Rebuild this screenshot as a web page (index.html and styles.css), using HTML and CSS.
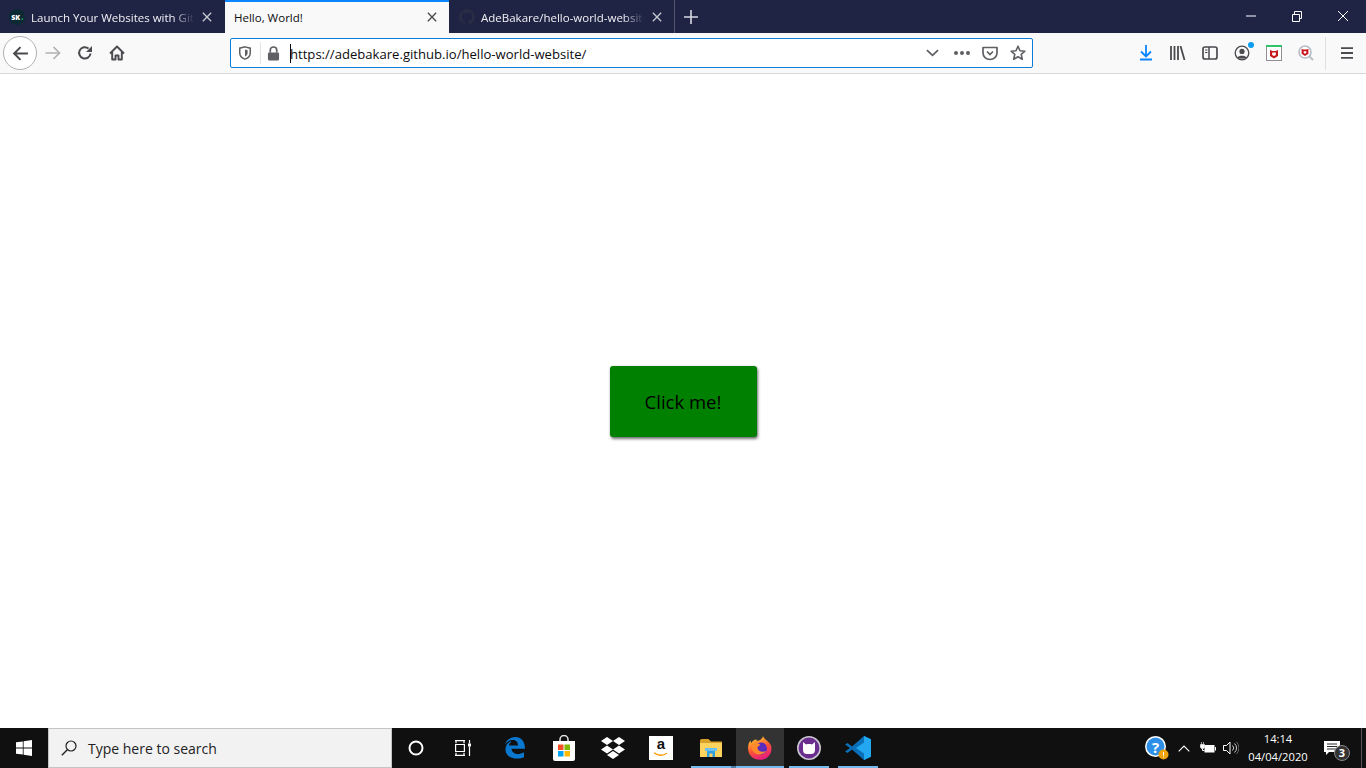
FILE: index.html
```html
<!DOCTYPE html>
<html lang="en">
<head>
<meta charset="utf-8">
<title>Hello, World!</title>
<link rel="stylesheet" href="styles.css">
</head>
<body>
<div class="browser">
  <header class="tabbar">
    <div class="tab tab-first">
      <svg class="favicon" viewBox="0 0 16 16"><circle cx="8" cy="8" r="8" fill="#0c2a33"/><text x="2.200" y="10.600" class="sk">SK</text><circle cx="13.300" cy="10" r=".8" fill="#2fd08a"/></svg>
      <span class="tab-title">Launch Your Websites with Gith</span>
      <svg class="tab-close" viewBox="0 0 12 12"><path d="M1 1l10 10M11 1L1 11" stroke="#c6c8d0" stroke-width="1.600"/></svg>
    </div>
    <div class="tab tab-active">
      <span class="tab-title">Hello, World!</span>
      <svg class="tab-close" viewBox="0 0 12 12"><path d="M1 1l10 10M11 1L1 11" stroke="#4a4a4f" stroke-width="1.600"/></svg>
    </div>
    <div class="tab tab-third">
      <svg class="favicon" viewBox="0 0 16 16"><path fill="#2a2d45" d="M8 0a8 8 0 0 0-2.500 15.600c.4.100.5-.2.5-.4v-1.400c-2.200.5-2.700-1-2.700-1-.4-.9-.9-1.200-.9-1.200-.7-.5.100-.5.100-.5.800.100 1.200.800 1.200.800.700 1.200 1.900.900 2.300.700.100-.5.300-.9.500-1.100-1.800-.2-3.600-.9-3.600-4 0-.9.300-1.600.800-2.100-.1-.2-.4-1 .100-2.100 0 0 .700-.2 2.200.800a7.600 7.600 0 0 1 4 0c1.500-1 2.200-.8 2.200-.8.400 1.100.2 1.900.1 2.100.5.600.8 1.300.8 2.100 0 3.100-1.900 3.700-3.700 3.900.3.300.6.800.6 1.500v2.200c0 .2.100.5.600.4A8 8 0 0 0 8 0z"/></svg>
      <span class="tab-title">AdeBakare/hello-world-website</span>
      <svg class="tab-close" viewBox="0 0 12 12"><path d="M1 1l10 10M11 1L1 11" stroke="#c6c8d0" stroke-width="1.600"/></svg>
    </div>
    <div class="new-tab"><svg viewBox="0 0 14 14"><path d="M7 0v14M0 7h14" stroke="#d8dae2" stroke-width="1.600"/></svg></div>
    <div class="win-controls">
      <svg viewBox="0 0 46 33" class="win-btn"><path d="M18 16h10" stroke="#fff"/></svg>
      <svg viewBox="0 0 46 33" class="win-btn"><path d="M18.500 14.500h7v7h-7zM20.500 14v-2.500h7v7H26" fill="none" stroke="#fff"/></svg>
      <svg viewBox="0 0 46 33" class="win-btn"><path d="M18 11l10 10M28 11L18 21" stroke="#fff"/></svg>
    </div>
  </header>

  <nav class="navbar">
    <button class="back" aria-label="Back"><svg viewBox="0 0 16 16"><path d="M15 8H2M8 2L2 8l6 6" fill="none" stroke="#4a4a4f" stroke-width="1.900"/></svg></button>
    <svg class="nav-icon fwd" viewBox="0 0 16 16"><path d="M0 8h14M8 2l6 6-6 6" fill="none" stroke="#b1b1b3" stroke-width="1.700"/></svg>
    <svg class="nav-icon reload" viewBox="0 0 16 16"><path d="M13.500 8.500A5.700 5.700 0 1 1 11.500 3.500" fill="none" stroke="#4a4a4f" stroke-width="2"/><path d="M15 1v6H9z" fill="#4a4a4f"/></svg>
    <svg class="nav-icon home" viewBox="0 0 16 16"><path d="M1 8.500L8 1.500l7 7M3.200 7v7.500h3.300V10.500h3V14.500h3.300V7" fill="none" stroke="#4a4a4f" stroke-width="1.900" stroke-linejoin="round"/></svg>

    <div class="urlbar">
      <svg class="u-shield" viewBox="0 0 16 16"><path d="M8 1l6 1.500V8c0 3.500-3 6-6 7-3-1-6-3.500-6-7V2.500z" fill="none" stroke="#5f5f64" stroke-width="1.700"/><path d="M8 4l3 .8V8c0 2-1.500 3.300-3 4z" fill="#5f5f64"/></svg>
      <span class="u-sep"></span>
      <svg class="u-lock" viewBox="0 0 14 16"><path d="M3.500 7V4.500a3.500 3.500 0 0 1 7 0V7" fill="none" stroke="#5f5f64" stroke-width="1.800"/><rect x="1" y="7" width="12" height="8.500" rx="1.200" fill="#5f5f64"/></svg>
      <span class="u-text"><span class="caret"></span>https://adebakare.github.io/hello-world-website/</span>
      <svg class="u-chev" viewBox="0 0 14 8"><path d="M1 1l6 5.500L13 1" fill="none" stroke="#5f5f64" stroke-width="1.900"/></svg>
      <svg class="u-dots" viewBox="0 0 16 4"><circle cx="2" cy="2" r="2" fill="#5f5f64"/><circle cx="8" cy="2" r="2" fill="#5f5f64"/><circle cx="14" cy="2" r="2" fill="#5f5f64"/></svg>
      <svg class="u-pocket" viewBox="0 0 16 16"><path d="M1 2.500h14V8a7 6.500 0 0 1-14 0z" fill="none" stroke="#5f5f64" stroke-width="1.700" stroke-linejoin="round"/><path d="M5 6.500l3 3 3-3" fill="none" stroke="#5f5f64" stroke-width="1.700"/></svg>
      <svg class="u-star" viewBox="0 0 16 16"><path d="M8 1.200l2 4.500 4.900.5-3.700 3.200 1.100 4.900L8 11.800l-4.300 2.500 1.100-4.900L1.100 6.200 6 5.700z" fill="none" stroke="#5f5f64" stroke-width="1.600" stroke-linejoin="round"/></svg>
    </div>

    <div class="tools">
      <svg class="t-download" viewBox="0 0 14 16"><path d="M7 0v11M2 6.500l5 5 5-5" fill="none" stroke="#0a84ff" stroke-width="1.800"/><path d="M1 14.500h12" stroke="#0a84ff" stroke-width="2"/></svg>
      <svg class="t-library" viewBox="0 0 16 14"><path d="M1 0v14M4.500 0v14M8 0v14M10.500 0l4 14" fill="none" stroke="#4a4a4f" stroke-width="1.800"/></svg>
      <svg class="t-sidebar" viewBox="0 0 16 14"><rect x="1" y="1" width="14" height="12" rx="2" fill="none" stroke="#4a4a4f" stroke-width="1.700"/><path d="M7 1v12" stroke="#4a4a4f" stroke-width="1.500"/><path d="M3 4h2.500M3 6.500h2.500" stroke="#4a4a4f"/></svg>
      <span class="t-account">
        <svg viewBox="0 0 16 16"><circle cx="8" cy="8" r="6.800" fill="none" stroke="#4a4a4f" stroke-width="1.300"/><circle cx="8" cy="6.400" r="2.600" fill="#4a4a4f"/><path d="M3.500 12.500c1-2.500 8-2.500 9 0-1.500 1.500-7.500 1.500-9 0z" fill="#4a4a4f"/></svg>
        <i class="t-dot"></i>
      </span>
      <svg class="t-mcafee" viewBox="0 0 16 16"><rect x=".5" y=".5" width="15" height="15" fill="#fff" stroke="#8f8f94"/><rect width="16" height="2" fill="#2fc46a"/><path d="M4 5l2.500 1h3L12 5v6l-4 2.500L4 11z" fill="#c8161d"/><path d="M6.200 7.500h3.600v2.500L8 11l-1.800-1z" fill="#fff"/></svg>
      <svg class="t-search" viewBox="0 0 16 16"><circle cx="7" cy="7" r="6" fill="#fff" stroke="#b5bcc4" stroke-width="1.600"/><path d="M11 11l4 4" stroke="#b5bcc4" stroke-width="1.800"/><path d="M3.600 3.800l1.800.8h3.200l1.800-.8v5l-3.400 2.200-3.400-2.200z" fill="#c8161d"/><path d="M5.700 6.200h2.600v1.800L7 8.800 5.700 8z" fill="#fff"/></svg>
      <span class="t-sep"></span>
      <svg class="t-menu" viewBox="0 0 14 12"><path d="M1 1.200h12M1 6h12M1 10.800h12" stroke="#4a4a4f" stroke-width="1.800"/></svg>
    </div>
  </nav>

  <main class="page">
    <button class="cta">Click me!</button>
  </main>

  <footer class="taskbar">
    <div class="start"><svg viewBox="0 0 16 16"><path fill="#fff" d="M0 2.300l6.800-.9v6.200H0zM7.600 1.300L16 0v7.600H7.600zM0 8.400h6.800v6.200L0 13.700zM7.600 8.400H16V16l-8.400-1.200z"/></svg></div>
    <div class="search">
      <svg viewBox="0 0 16 16"><circle cx="10" cy="6" r="5" fill="none" stroke="#222" stroke-width="1.200"/><path d="M6.300 9.700L.8 15.200" stroke="#222" stroke-width="1.400"/></svg>
      <span>Type here to search</span>
    </div>
    <div class="tb-item tb-cortana"><svg viewBox="0 0 16 16"><circle cx="8" cy="8" r="6.500" fill="none" stroke="#fff" stroke-width="2"/></svg></div>
    <div class="tb-item tb-view"><svg viewBox="0 0 18 16"><path d="M0 .7h10M0 15.300h10M1 .7v2.500M9 .7v2.500M1 12.800v2.500M9 12.800v2.500M.6 4.500h8.800v7H.6z" fill="none" stroke="#fff" stroke-width="1.200"/><rect x="13" y="3.500" width="3" height="3" fill="#fff"/><path d="M14.500 0v3.500M14.500 6.500V16" stroke="#fff" stroke-width="1.200"/></svg></div>
    <div class="tb-item tb-edge"><svg viewBox="0 0 20 22"><path fill="#0b78d0" d="M10.500 0C16 0 20 4 20 11.800H6.500c.3 5 6.500 7 12.500 3.500v5C13 23 1 22 .5 13 .2 8.500 3 5 6.800 4c-1.800 1.700-2.600 3-2.800 4.500h9C13 5.500 11.500 3 7.800 3 4 3 1.600 5 0 8 1 3.500 5 0 10.500 0z"/></svg></div>
    <div class="tb-item tb-store"><svg viewBox="0 0 24 26"><path d="M8 7V4.500a4 4 0 0 1 8 0V7" fill="none" stroke="#e8e8e8" stroke-width="1.500"/><path d="M1 6h22v18a2 2 0 0 1-2 2H3a2 2 0 0 1-2-2z" fill="#fff"/><rect x="6" y="9.500" width="5.500" height="5.500" fill="#f25022"/><rect x="12.500" y="9.500" width="5.500" height="5.500" fill="#7fba00"/><rect x="6" y="16" width="5.500" height="5.500" fill="#00a4ef"/><rect x="12.500" y="16" width="5.500" height="5.500" fill="#ffb900"/></svg></div>
    <div class="tb-item tb-drop"><svg viewBox="0 0 24 22"><path fill="#fff" d="M6 0l6 4-6 4-6-4zM18 0l6 4-6 4-6-4zM6 8.500l6 4-6 4-6-4zM18 8.500l6 4-6 4-6-4zM6 18l6-4 6 4-6 4z"/></svg></div>
    <div class="tb-item tb-amazon"><div class="amazon"><span>a</span><svg viewBox="0 0 16 5"><path d="M1 .8c4 3 9 3 13 .5" fill="none" stroke="#f90" stroke-width="1.300"/></svg></div></div>
    <div class="tb-item tb-files run run-split"><svg viewBox="0 0 22 18"><path d="M0 1.500A1.500 1.500 0 0 1 1.500 0h7L11 2.500h11V18H0z" fill="#d9a12a"/><path d="M0 4h22v14H0z" fill="#fbd35e"/><path d="M7 11h8v7h-2.500v-3.500h-3V18H7z" fill="#2f9fe0"/><path d="M5 9h12v3H5z" fill="#6cc1ee"/></svg></div>
    <div class="tb-item tb-firefox run active"><svg viewBox="0 0 24 24"><defs><linearGradient id="ff" x1=".3" y1="0" x2=".7" y2="1"><stop offset="0" stop-color="#ffd02e"/><stop offset=".5" stop-color="#ff5634"/><stop offset="1" stop-color="#e31587"/></linearGradient></defs><path fill="url(#ff)" d="M15 0c.5 3 6 5 8 9.500 1.500 5-.5 10.500-5 13C13 25 5.500 24 2 19-.8 14.500-.5 8 2.500 4.500c0 1 .4 2 1 2.500C4.500 5 6 3.800 8.500 3.300c-.5 1 0 1.500.5 1.500C11 5 14.500 3 15 0z"/><circle cx="13" cy="12.500" r="6" fill="#5b2bbd"/><path fill="#ff8a2c" d="M4 9.500c2-2.500 5.500-2.800 7.500-1.500.8.500.3 1.500-.5 2-.5.300-1.500.5-1.500 2 0 3 5 5 8.500 3-2 3.500-7.500 4.500-10.500 2.500C4.500 16 3.200 12.500 4 9.500z"/></svg></div>
    <div class="tb-item tb-kraken run"><svg viewBox="0 0 24 24"><circle cx="12" cy="12" r="11.200" fill="#6a2d8e" stroke="#c9c5cf" stroke-width="1.600"/><path fill="#fff" d="M6 6l3 2.500c2-.6 4-.6 6 0L18 6v8.500a4 4 0 0 1-4 3.500h-4a4 4 0 0 1-4-3.500z"/></svg></div>
    <div class="tb-item tb-code run"><svg viewBox="0 0 26 26"><path fill="#0a6fb8" d="M19 1l7 3.200v17.600L19 25 7 14.500 2.500 18 0 16.500 5 13 0 9.500 2.500 8 7 11.500z"/><path fill="#22a7f0" d="M19 1l7 3.200v17.600L19 25zM19 7.500L11 13l8 5.500z"/></svg></div>
    <div class="tray">
      <span class="tr-help"><svg viewBox="0 0 24 24"><circle cx="10.500" cy="10.500" r="10.500" fill="#fff"/><circle cx="10.500" cy="10.500" r="9" fill="#2f8fe6"/><text x="10.500" y="16.500" class="help-q">?</text><circle cx="18.500" cy="18.500" r="5" fill="#f0a30a"/><path d="M18.500 16v3.500M18.500 20.500v1" stroke="#fff"/></svg></span>
      <svg class="tr-chev" viewBox="0 0 12 7"><path d="M.7 6.300L6 1l5.300 5.300" fill="none" stroke="#fff" stroke-width="1.100"/></svg>
      <svg class="tr-batt" viewBox="0 0 16 12"><path d="M1.500 0v2.500M3.500 0v2.500M.5 2.500h4v2.500c0 1-.8 1.500-2 1.500s-2-.5-2-1.500z" fill="#fff" stroke="#fff" stroke-width=".6"/><path d="M2.500 6.500v2h2" fill="none" stroke="#fff"/><rect x="4.500" y="3" width="10" height="7.500" fill="#fff"/><rect x="15" y="5" width="1" height="3.500" fill="#fff"/></svg>
      <svg class="tr-vol" viewBox="0 0 16 14"><path d="M.5 4.500h3L7 1v12L3.500 9.500h-3z" fill="none" stroke="#fff"/><path d="M9.500 4.500a3.500 3.500 0 0 1 0 5M11.500 2.500a6 6 0 0 1 0 9" fill="none" stroke="#ccc"/><path d="M13.500 1a8.500 8.500 0 0 1 0 12" fill="none" stroke="#666"/></svg>
      <div class="clock"><span>14:14</span><span>04/04/2020</span></div>
      <div class="notif">
        <svg viewBox="0 0 16 14"><path fill="#fff" d="M0 0h16v11H5l-3 3v-3H0z"/><path d="M3 3h10M3 5.500h10M3 8h10" stroke="#111" stroke-width=".9"/></svg>
        <i class="notif-badge">3</i>
      </div>
      <span class="show-desktop"></span>
    </div>
  </footer>
</div>
</body>
</html>
```

FILE: styles.css
```css
* { box-sizing: border-box; }
html, body { margin: 0; height: 100%; overflow: hidden; }
body { font-family: "Open Sans", "Noto Sans", sans-serif; background: #fff; }
svg { display: block; flex: none; }

.browser { display: flex; flex-direction: column; height: 768px; }

/* tab strip */
.tabbar { display: flex; height: 33px; background: #1f2444; flex: none; }
.tab { display: flex; align-items: center; width: 224px; height: 33px; padding-top: 1px; font-size: 11.500px; color: #f0f0f4; }
.tab-first { width: 225px; padding: 1px 13px 0 9px; }
.tab-active { background: #f9f9fa; color: #0c0c0d; border-top: 2px solid #0a84ff; padding: 0 12px 1px 9px; }
.tab-third { width: 226px; padding: 1px 12px 0 10px; border-right: 1px solid #55586c; }
.favicon { width: 16px; height: 16px; margin-right: 6px; }
.sk { font: 800 7px "Open Sans", sans-serif; fill: #fff; }
.tab-title { flex: 1; min-width: 0; white-space: nowrap; -webkit-mask-image: linear-gradient(90deg, #000 86%, transparent 99%); mask-image: linear-gradient(90deg, #000 86%, transparent 99%); }
.tab-active .tab-title { -webkit-mask-image: none; mask-image: none; }
.tab-close { width: 10px; height: 10px; margin-left: 6px; }
.new-tab { width: 32px; display: flex; align-items: center; justify-content: center; }
.new-tab svg { width: 14px; height: 14px; }
.win-controls { margin-left: auto; display: flex; }
.win-btn { width: 46px; height: 33px; }

/* toolbar */
.navbar { display: flex; align-items: center; height: 41px; background: #f9f9fa; border-bottom: 1px solid #d7d7db; padding: 0 0 0 3px; flex: none; }
.back { width: 34px; height: 34px; padding: 0; border: 1px solid #b1b1b3; border-radius: 50%; background: #fff; display: flex; align-items: center; justify-content: center; }
.back svg { width: 17px; height: 17px; }
.nav-icon { width: 16px; height: 16px; }
.fwd { margin-left: 8px; width: 17px; }
.reload { margin-left: 15px; }
.home { margin-left: 16px; }

.urlbar { display: flex; align-items: center; width: 803px; height: 30px; margin-left: 105px; background: #fff; border: 1px solid #0a7ed8; border-radius: 2px; color: #0c0c0d; }
.u-shield { width: 14px; height: 14px; margin-left: 7px; }
.u-sep { width: 1px; height: 22px; background: #e4e4e6; margin-left: 8px; }
.u-lock { width: 13px; height: 15px; margin-left: 6px; }
.u-text { flex: 1; margin-left: 10px; padding-top: 1px; white-space: nowrap; font-size: 13.100px; position: relative; }
.caret { position: absolute; left: 0; top: 0; width: 1px; height: 19px; background: #0c0c0d; }
.u-chev { width: 13px; height: 8px; margin-right: 15px; }
.u-dots { width: 16px; height: 4px; margin-right: 12px; }
.u-pocket { width: 16px; height: 16px; margin-right: 12px; }
.u-star { width: 16px; height: 16px; margin-right: 6px; }

.tools { display: flex; align-items: center; margin-left: 106px; }
.t-download { width: 14px; height: 16px; }
.t-library { width: 16px; height: 14px; margin-left: 17px; }
.t-sidebar { width: 16px; height: 14px; margin-left: 16px; }
.t-account { position: relative; margin-left: 16px; }
.t-account svg { width: 16px; height: 16px; }
.t-dot { position: absolute; top: -3px; right: -4px; width: 6px; height: 6px; border-radius: 50%; background: #0a9df0; }
.t-mcafee { width: 16px; height: 16px; margin-left: 16px; }
.t-search { width: 16px; height: 16px; margin-left: 16px; }
.t-sep { width: 1px; height: 33px; background: #e0e0e2; margin-left: 11px; }
.t-menu { width: 14px; height: 12px; margin-left: 14px; }

/* page */
.page { flex: 1; background: #fff; display: flex; align-items: center; justify-content: center; }
.cta { width: 147px; height: 71px; padding: 0; border: 0; border-radius: 3px; background: #008000; color: #000; font-family: "Open Sans", sans-serif; font-size: 18.500px; box-shadow: 1px 2px 3px rgba(0,0,0,.55), 0 0 2px rgba(0,0,0,.15); }

/* taskbar */
.taskbar { display: flex; align-items: stretch; height: 40px; background: #101010; flex: none; }
.start { width: 48px; display: flex; align-items: center; justify-content: center; }
.start svg { width: 16px; height: 16px; }
.search { width: 344px; display: flex; align-items: center; gap: 11px; padding-left: 12px; background: #f2f2f2; border: 1px solid #c4c4c4; font-size: 14px; color: #222; }
.search svg { width: 16px; height: 16px; }
.tb-item { display: flex; align-items: center; justify-content: center; position: relative; }
.tb-cortana { width: 48px; }
.tb-cortana svg { width: 16px; height: 16px; }
.tb-view { width: 48px; }
.tb-view svg { width: 18px; height: 16px; }
.tb-edge { width: 54px; }
.tb-edge svg { width: 20px; height: 22px; }
.tb-store { width: 44px; }
.tb-store svg { width: 24px; height: 26px; }
.tb-drop { width: 54px; }
.tb-drop svg { width: 24px; height: 22px; }
.tb-amazon { width: 42px; margin-right: 4px; }
.amazon { width: 24px; height: 24px; background: #fff; display: flex; flex-direction: column; align-items: center; color: #111; font: 700 15px/16px "Liberation Sans", sans-serif; }
.amazon svg { width: 16px; height: 5px; }
.tb-files { width: 50px; }
.tb-files svg { width: 22px; height: 18px; }
.tb-firefox { width: 48px; }
.tb-firefox svg { width: 24px; height: 24px; }
.tb-kraken { width: 50px; }
.tb-kraken svg { width: 24px; height: 24px; }
.tb-code { width: 48px; }
.tb-code svg { width: 26px; height: 26px; }
.active { background: #333; }
.run::after { content: ""; position: absolute; left: 5px; right: 5px; bottom: 0; height: 2px; background: #76b9ed; }
.tb-code.run::after { left: 4px; right: 4px; }
.tb-firefox.run::after { left: 0; right: 0; }
.run-split::after { box-shadow: 5px 0 0 #4d7fa3; }

.tray { margin-left: auto; display: flex; align-items: center; color: #fff; }
.tr-help svg { width: 24px; height: 24px; }
.tr-chev { width: 12px; height: 7px; margin-left: 9px; }
.tr-batt { width: 16px; height: 12px; margin-left: 10px; }
.tr-vol { width: 16px; height: 14px; margin-left: 7px; }
.clock { display: flex; flex-direction: column; align-items: center; width: 70px; margin-left: 4px; font-size: 11.200px; line-height: 18px; }
.notif { position: relative; width: 40px; display: flex; justify-content: center; padding-right: 2px; }
.notif svg { width: 16px; height: 14px; }
.notif-badge { position: absolute; left: 21px; top: 4px; width: 16px; height: 16px; border-radius: 50%; background: #333; border: 1px solid #888; font: 700 11px/14px "Open Sans", sans-serif; text-align: center; color: #fff; }
.show-desktop { width: 1px; height: 40px; background: #555; margin-left: 8px; margin-right: 4px; }
.help-q { font: 700 15px "Open Sans", sans-serif; fill: #fff; text-anchor: middle; }
```
